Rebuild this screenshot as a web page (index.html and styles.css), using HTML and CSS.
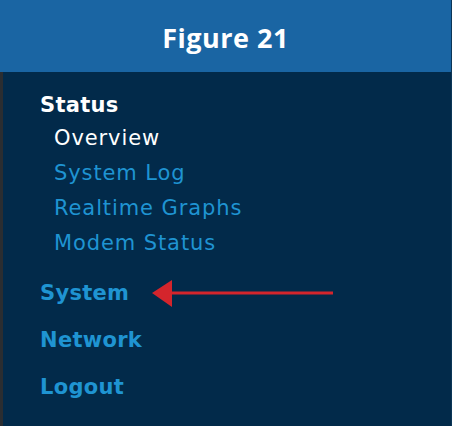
FILE: index.html
```html
<!DOCTYPE html>
<html lang="en">
<head>
<meta charset="utf-8">
<title>Figure 21</title>
<link rel="stylesheet" href="styles.css">
</head>
<body>
<div class="frame">
  <header class="fig-header">Figure 21</header>
  <nav class="menu">
    <div class="section-title">Status</div>
    <ul class="sub-list">
      <li class="sub-item active">Overview</li>
      <li class="sub-item">System Log</li>
      <li class="sub-item">Realtime Graphs</li>
      <li class="sub-item">Modem Status</li>
    </ul>
    <ul class="main-list">
      <li class="main-item">System
        <svg class="arrow" width="190" height="30" viewBox="0 0 190 30" aria-hidden="true">
          <polygon points="0,14 20,1 20,28" fill="#d4252c"/>
          <rect x="18" y="12.5" width="163" height="3" fill="#d4252c"/>
        </svg>
      </li>
      <li class="main-item">Network</li>
      <li class="main-item">Logout</li>
    </ul>
  </nav>
</div>
</body>
</html>
```
FILE: styles.css
```css
html, body {
  margin: 0;
  padding: 0;
  background: #022a4a;
}
.frame {
  width: 452px;
  height: 426px;
  display: flex;
  flex-direction: column;
  overflow: hidden;
  border-right: 1px solid #0c3657;
  box-sizing: border-box;
}
.fig-header {
  height: 72px;
  flex: none;
  background: #1a65a3;
  color: #ffffff;
  font-family: "Open Sans", sans-serif;
  font-weight: 700;
  font-size: 27px;
  letter-spacing: 0.5px;
  display: flex;
  align-items: center;
  justify-content: center;
  padding-top: 3px;
  box-sizing: border-box;
}
.menu {
  flex: 1;
  background: #022a4a;
  border-left: 3px solid #2a2d31;
  padding: 17px 0 0 37px;
  font-family: "DejaVu Sans", sans-serif;
}
.section-title {
  color: #ffffff;
  font-weight: 700;
  font-size: 21px;
  line-height: 33px;
  letter-spacing: 0.3px;
}
.sub-list, .main-list {
  list-style: none;
  margin: 0;
  padding: 0;
}
.sub-list {
  padding-left: 14px;
  margin-top: -1px;
}
.sub-item {
  color: #1f94d2;
  font-size: 21px;
  line-height: 35px;
  letter-spacing: 0.9px;
}
.sub-item.active {
  color: #ffffff;
}
.main-list {
  margin-top: 9px;
}
.main-item {
  position: relative;
  color: #1f94d2;
  font-weight: 700;
  font-size: 21px;
  line-height: 47px;
  letter-spacing: 0.3px;
}
.arrow {
  position: absolute;
  left: 112px;
  top: 9px;
}
```
